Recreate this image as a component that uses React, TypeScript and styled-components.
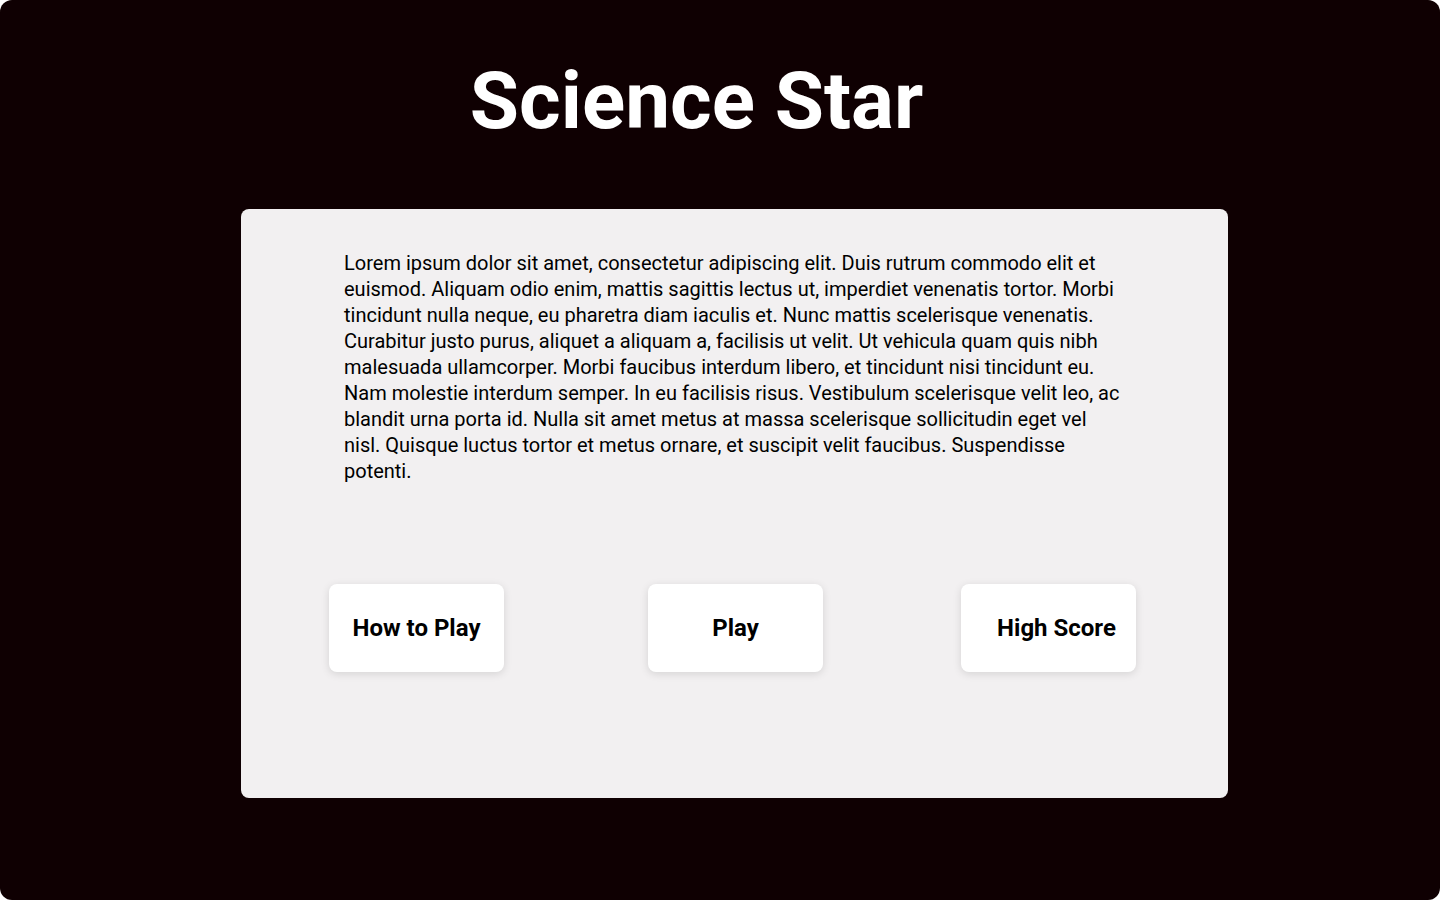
import React from "react";
import styled, { createGlobalStyle } from "styled-components";

const Global = createGlobalStyle`
  html, body { margin: 0; padding: 0; background: #ffffff; }
  body { font-family: Roboto, "Liberation Sans", sans-serif; }
  * { box-sizing: border-box; }
`;

const Screen = styled.div`
  width: 1440px;
  height: 900px;
  background: #0f0002;
  border-radius: 12px;
  display: flex;
  flex-direction: column;
  align-items: center;
  overflow: hidden;
`;

const Title = styled.h1`
  margin: 54px 0 0 -47px;
  font-family: Roboto, "Liberation Sans", sans-serif;
  font-weight: 700;
  font-size: 80px;
  line-height: 94px;
  color: #ffffff;
  letter-spacing: 0;
`;

const Card = styled.section`
  margin-top: 61px;
  margin-left: 29px;
  width: 987px;
  height: 589px;
  background: #f2f0f1;
  border-radius: 8px;
  display: flex;
  flex-direction: column;
  align-items: center;
  padding-top: 41px;
`;

const Intro = styled.p`
  margin: 0;
  width: 781px;
  font-family: Roboto, "Liberation Sans", sans-serif;
  font-size: 20px;
  line-height: 26px;
  color: #000000;
`;

const ButtonRow = styled.div`
  align-self: stretch;
  display: flex;
  justify-content: space-between;
  padding: 0 92px 0 88px;
  margin-top: 100px;
`;

const MenuButton = styled.button<{ $shift?: number; $nudge?: number }>`
  width: 175px;
  height: 88px;
  margin-left: ${(p) => p.$nudge ?? 0}px;
  border: none;
  border-radius: 8px;
  background: #ffffff;
  box-shadow: 0 2px 8px rgba(0, 0, 0, 0.12);
  font-family: Roboto, "Liberation Sans", sans-serif;
  font-weight: 700;
  font-size: 24px;
  color: #000000;
  padding: 0 0 0 ${(p) => p.$shift ?? 0}px;
  cursor: pointer;
`;

const text =
  "Lorem ipsum dolor sit amet, consectetur adipiscing elit. Duis rutrum commodo elit et euismod. Aliquam odio enim, mattis sagittis lectus ut, imperdiet venenatis tortor. Morbi tincidunt nulla neque, eu pharetra diam iaculis et. Nunc mattis scelerisque venenatis. Curabitur justo purus, aliquet a aliquam a, facilisis ut velit. Ut vehicula quam quis nibh malesuada ullamcorper. Morbi faucibus interdum libero, et tincidunt nisi tincidunt eu. Nam molestie interdum semper. In eu facilisis risus. Vestibulum scelerisque velit leo, ac blandit urna porta id. Nulla sit amet metus at massa scelerisque sollicitudin eget vel nisl. Quisque luctus tortor et metus ornare, et suscipit velit faucibus. Suspendisse potenti.";

export default function App() {
  return (
    <>
      <Global />
      <Screen>
        <Title>Science Star</Title>
        <Card>
          <Intro>{text}</Intro>
          <ButtonRow>
            <MenuButton>How to Play</MenuButton>
            <MenuButton $nudge={6}>Play</MenuButton>
            <MenuButton $shift={16}>High Score</MenuButton>
          </ButtonRow>
        </Card>
      </Screen>
    </>
  );
}
